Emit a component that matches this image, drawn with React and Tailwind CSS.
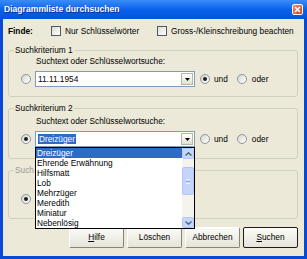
import React from 'react';

const items = ['Dreizüger', 'Ehrende Erwähnung', 'Hilfsmatt', 'Lob', 'Mehrzüger', 'Meredith', 'Miniatur', 'Nebenlösig'];

function Radio({ checked }) {
  return (
    <span className="w-[10px] h-[10px] rounded-full border border-[#8B95A0] bg-linear-to-br from-[#D8D7CF] to-white flex items-center justify-center shrink-0">
      {checked && <span className="w-[4px] h-[4px] rounded-full bg-[#202020]" />}
    </span>
  );
}

function Check() {
  return <span className="w-[10px] h-[10px] border border-[#4E5A66] bg-linear-to-br from-[#DCDBD3] to-white shrink-0" />;
}

function DropBtn() {
  return (
    <span className="w-[12px] h-[12px] border border-[#B8B5A8] bg-linear-to-b from-white to-[#E2E0D5] flex items-center justify-center shrink-0">
      <svg width="5" height="3" viewBox="0 0 5 3"><path d="M0 0h5L2.5 3z" fill="#000" /></svg>
    </span>
  );
}

function Combo({ children }) {
  return (
    <div className="w-[160px] h-[16px] border border-[#7F9DB9] bg-white flex items-center pl-[2px] pr-[1px] shrink-0">
      <div className="flex-1 leading-[10px]">{children}</div>
      <DropBtn />
    </div>
  );
}

function Kriterium({ title, h, children, legendClass = '' }) {
  return (
    <fieldset className={`border border-[#D0D0BF] rounded-[3px] ${h}`}>
      <legend className={`ml-[5px] px-[1px] leading-[10px] ${legendClass}`}>{title}</legend>
      {children}
    </fieldset>
  );
}

function Zeile({ combo, first }) {
  return (
    <>
      <div className={`pl-[27px] leading-[10px] ${first ? 'mt-[1px]' : 'mt-[3px]'}`}>Suchtext oder Schlüsselwortsuche:</div>
      <div className="flex items-center mt-[5px] pl-[12px]">
        <Radio checked={!first} />
        <div className="ml-[4px]">{combo}</div>
        <span className="ml-[5px]"><Radio checked={first} /></span>
        <span className="ml-[4px]">und</span>
        <span className="ml-[9px]"><Radio /></span>
        <span className="ml-[5px]">oder</span>
      </div>
    </>
  );
}

function XpButton({ children, def }) {
  return (
    <button className={`w-[55px] h-[21px] flex items-center justify-center rounded-[2px] bg-linear-to-b from-[#FBFBF8] to-[#E6E4D9] border ${def ? 'border-[#1C1C1C]' : 'border-t-[#FFFFFF] border-l-[#FFFFFF] border-r-[#86847A] border-b-[#86847A]'}`}>
      {children}
    </button>
  );
}

export default function App() {
  return (
    <div className="w-[307px] h-[259px] flex flex-col bg-[#0849D6] font-['Liberation_Sans',Arial,sans-serif] text-[8.3px] text-black overflow-hidden">
      <div className="h-[19px] flex items-center justify-between pl-[4px] pr-[4px] bg-linear-to-b from-[#3A8CF6] via-[#0862EC] to-[#0552DC] shrink-0">
        <span className="text-white font-bold text-[8.6px] [text-shadow:1px_1px_0_#0A2E8C]">Diagrammliste durchsuchen</span>
        <span className="w-[11px] h-[11px] rounded-[2px] border border-white bg-linear-to-br from-[#F08A6E] to-[#D23A14] flex items-center justify-center">
          <svg width="7" height="7" viewBox="0 0 7 7"><path d="M1 1l5 5M6 1L1 6" stroke="#fff" strokeWidth="1.6" /></svg>
        </span>
      </div>

      <div className="flex-1 mx-[3px] mb-[3px] bg-[#ECE9D8] relative flex flex-col pl-[5px] pr-[6px] pt-[6px]">
        <div className="h-[12px] flex items-center">
          <span className="font-bold w-[43px]">Finde:</span>
          <Check />
          <span className="ml-[4px] w-[92px]">Nur Schlüsselwörter</span>
          <Check />
          <span className="ml-[4px]">Gross-/Kleinschreibung beachten</span>
        </div>

        <div className="mt-[8px]">
          <Kriterium title="Suchkriterium 1" h="h-[52px]">
            <Zeile first combo={<Combo>11.11.1954</Combo>} />
          </Kriterium>
        </div>

        <div className="mt-[6px]">
          <Kriterium title="Suchkriterium 2" h="h-[56px]">
            <Zeile combo={<Combo><span className="bg-[#316AC5] text-white px-[1px]">Dreizüger</span></Combo>} />
          </Kriterium>
        </div>

        {/* Suchkriterium 3 liegt unter der offenen Liste, nur der Anfang ist sichtbar */}
        <div className="mt-[6px]">
          <Kriterium title="Such" h="h-[54px]" legendClass="text-[#9A9A92] pr-[6px]">
            <div className="pl-[12px] mt-[19px] flex items-center">
              <Radio checked />
            </div>
          </Kriterium>
        </div>

        <div className="mt-[8px] flex justify-end gap-[3px]">
          <XpButton><span><span className="underline">H</span>ilfe</span></XpButton>
          <XpButton>Löschen</XpButton>
          <XpButton>Abbrechen</XpButton>
          <XpButton def><span><span className="underline">S</span>uchen</span></XpButton>
        </div>

        <div className="absolute left-[32px] top-[128px] w-[160px] h-[82px] border border-[#000] bg-white flex">
          <div className="flex-1 flex flex-col">
            {items.map((it, i) => (
              <div key={it} className={`h-[10px] leading-[10px] pl-[1px] ${i === 0 ? 'bg-[#316AC5] text-white' : ''}`}>{it}</div>
            ))}
          </div>
          <div className="w-[12px] flex flex-col bg-[#F4F3EE]">
            <div className="h-[11px] rounded-[2px] border border-[#B4C8F6] bg-[#C6D6FC] flex items-center justify-center">
              <svg width="7" height="4" viewBox="0 0 7 4"><path d="M0.5 3.5L3.5 0.8L6.5 3.5" stroke="#4D6185" strokeWidth="1.4" fill="none" /></svg>
            </div>
            <div className="flex-1 pt-[8px]">
              <div className="h-[28px] rounded-[2px] border border-[#B0C6F8] bg-[#C4D4FC] flex flex-col items-center justify-center gap-[1px]">
                <span className="w-[4px] h-[1px] bg-[#EEF3FE]" />
                <span className="w-[4px] h-[1px] bg-[#8CB0F8]" />
                <span className="w-[4px] h-[1px] bg-[#EEF3FE]" />
              </div>
            </div>
            <div className="h-[11px] rounded-[2px] border border-[#B4C8F6] bg-[#C6D6FC] flex items-center justify-center">
              <svg width="7" height="4" viewBox="0 0 7 4"><path d="M0.5 0.5L3.5 3.2L6.5 0.5" stroke="#4D6185" strokeWidth="1.4" fill="none" /></svg>
            </div>
          </div>
        </div>
      </div>
    </div>
  );
}
